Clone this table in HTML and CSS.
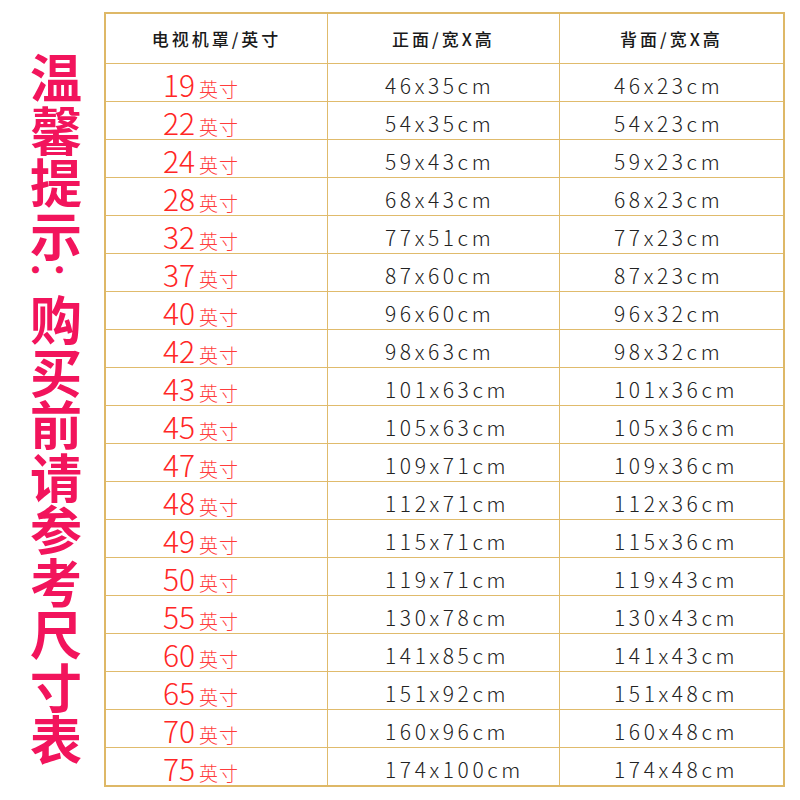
FILE: index.html
```html
<!DOCTYPE html>
<html lang="zh-CN">
<head>
<meta charset="utf-8">
<link rel="stylesheet" href="styles.css">
</head>
<body>
<div class="page">
  <div class="side">
    <span class="ch">温</span><span class="ch">馨</span><span class="ch">提</span><span class="ch">示</span><span class="ch colon"><span class="rot">：</span></span><span class="ch">购</span><span class="ch">买</span><span class="ch">前</span><span class="ch">请</span><span class="ch">参</span><span class="ch">考</span><span class="ch">尺</span><span class="ch">寸</span><span class="ch">表</span>
  </div>
  <div class="table">
    <div class="hd">电视机罩/英寸</div><div class="hd">正面/宽X高</div><div class="hd">背面/宽X高</div>
    <div class="c1"><span class="n">19</span><span class="u">英寸</span></div><div class="cd c2">46x35cm</div><div class="cd c3">46x23cm</div>
    <div class="c1"><span class="n">22</span><span class="u">英寸</span></div><div class="cd c2">54x35cm</div><div class="cd c3">54x23cm</div>
    <div class="c1"><span class="n">24</span><span class="u">英寸</span></div><div class="cd c2">59x43cm</div><div class="cd c3">59x23cm</div>
    <div class="c1"><span class="n">28</span><span class="u">英寸</span></div><div class="cd c2">68x43cm</div><div class="cd c3">68x23cm</div>
    <div class="c1"><span class="n">32</span><span class="u">英寸</span></div><div class="cd c2">77x51cm</div><div class="cd c3">77x23cm</div>
    <div class="c1"><span class="n">37</span><span class="u">英寸</span></div><div class="cd c2">87x60cm</div><div class="cd c3">87x23cm</div>
    <div class="c1"><span class="n">40</span><span class="u">英寸</span></div><div class="cd c2">96x60cm</div><div class="cd c3">96x32cm</div>
    <div class="c1"><span class="n">42</span><span class="u">英寸</span></div><div class="cd c2">98x63cm</div><div class="cd c3">98x32cm</div>
    <div class="c1"><span class="n">43</span><span class="u">英寸</span></div><div class="cd c2">101x63cm</div><div class="cd c3">101x36cm</div>
    <div class="c1"><span class="n">45</span><span class="u">英寸</span></div><div class="cd c2">105x63cm</div><div class="cd c3">105x36cm</div>
    <div class="c1"><span class="n">47</span><span class="u">英寸</span></div><div class="cd c2">109x71cm</div><div class="cd c3">109x36cm</div>
    <div class="c1"><span class="n">48</span><span class="u">英寸</span></div><div class="cd c2">112x71cm</div><div class="cd c3">112x36cm</div>
    <div class="c1"><span class="n">49</span><span class="u">英寸</span></div><div class="cd c2">115x71cm</div><div class="cd c3">115x36cm</div>
    <div class="c1"><span class="n">50</span><span class="u">英寸</span></div><div class="cd c2">119x71cm</div><div class="cd c3">119x43cm</div>
    <div class="c1"><span class="n">55</span><span class="u">英寸</span></div><div class="cd c2">130x78cm</div><div class="cd c3">130x43cm</div>
    <div class="c1"><span class="n">60</span><span class="u">英寸</span></div><div class="cd c2">141x85cm</div><div class="cd c3">141x43cm</div>
    <div class="c1"><span class="n">65</span><span class="u">英寸</span></div><div class="cd c2">151x92cm</div><div class="cd c3">151x48cm</div>
    <div class="c1"><span class="n">70</span><span class="u">英寸</span></div><div class="cd c2">160x96cm</div><div class="cd c3">160x48cm</div>
    <div class="c1"><span class="n">75</span><span class="u">英寸</span></div><div class="cd c2">174x100cm</div><div class="cd c3">174x48cm</div>
  </div>
</div>
</body>
</html>
```

FILE: styles.css
```css
html, body {
  margin: 0;
  padding: 0;
  background: #ffffff;
}
body {
  font-family: "Noto Sans CJK SC", "Noto Sans", sans-serif;
}
.page {
  display: flex;
  align-items: flex-start;
  padding-top: 12px;
}
.side {
  flex: none;
  width: 96px;
  padding-left: 8px;
  padding-top: 38px;
  display: flex;
  flex-direction: column;
  align-items: center;
  color: #f2145c;
  font-weight: 700;
  font-size: 52px;
}
.ch {
  display: block;
  height: 52.5px;
  line-height: 52.5px;
}
.ch.colon {
  display: flex;
  justify-content: center;
  align-items: center;
  height: 32px;
  width: 52px;
}
.rot {
  flex: none;
  display: block;
  width: 47px;
  height: 47px;
  line-height: 47px;
  font-size: 47px;
  font-weight: 400;
  text-align: left;
  transform: translate(-3px, 5px) rotate(90deg);
}
.table {
  flex: none;
  width: 677px;
  border: 2px solid #deb867;
  background: #e0bb6c;
  display: grid;
  grid-template-columns: 221px 231px 223px;
  grid-template-rows: 49px repeat(19, 37px);
  gap: 1px;
}
.table > div {
  background: #ffffff;
  display: flex;
  align-items: center;
}
.hd {
  justify-content: center;
  font-size: 17px;
  font-weight: 500;
  letter-spacing: 3px;
  color: #1a1a1a;
}
.c1 {
  padding-left: 57px;
  padding-top: 4px;
  color: #ff2626;
  align-items: baseline !important;
}
.n {
  font-size: 30px;
  font-weight: 300;
  letter-spacing: 0px;
  line-height: 33px;
}
.u {
  font-size: 19px;
  font-weight: 300;
  letter-spacing: 1px;
  margin-left: 4px;
  color: #ff3c3c;
}
.cd {
  padding-top: 4px;
  font-size: 21px;
  font-weight: 300;
  letter-spacing: 3.6px;
  color: #222222;
}
.c2 {
  padding-left: 57px;
}
.c3 {
  padding-left: 54px;
}
```
